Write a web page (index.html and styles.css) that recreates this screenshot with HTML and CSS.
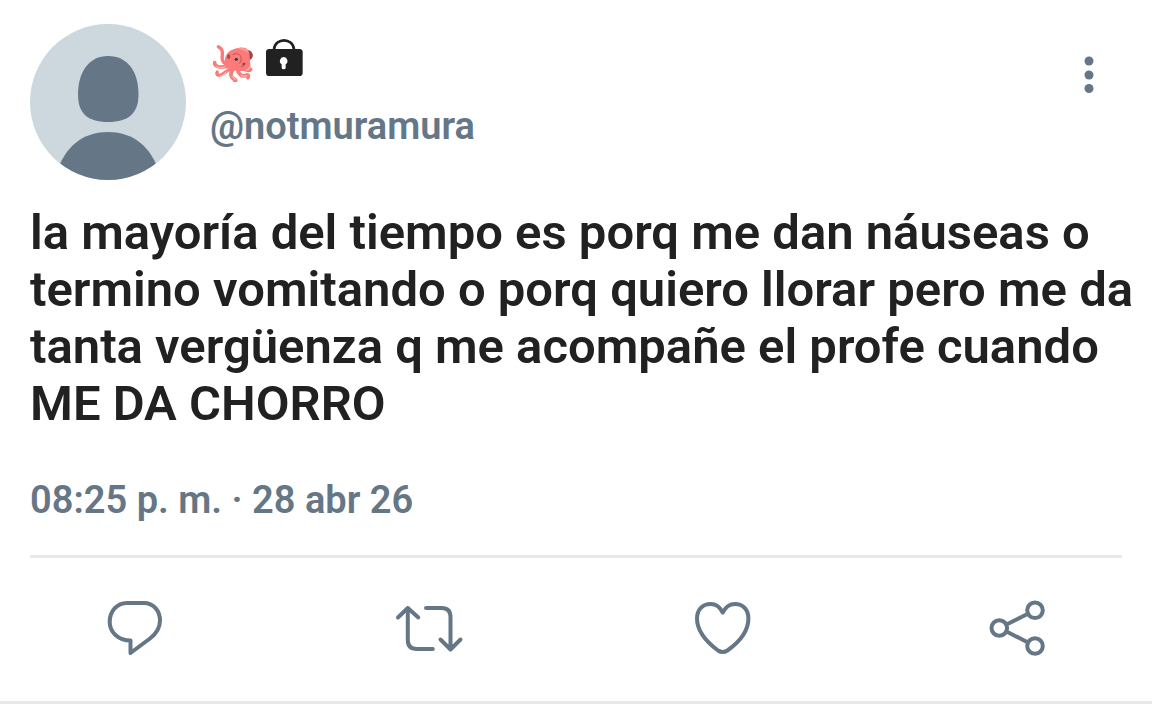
FILE: index.html
```html
<!DOCTYPE html>
<html lang="es">
<head>
<meta charset="utf-8">
<meta name="viewport" content="width=device-width, initial-scale=1">
<title>@notmuramura</title>
<link rel="stylesheet" href="styles.css">
</head>
<body>
<article class="post">
  <header class="head">
    <svg class="avatar" viewBox="0 0 156 156" aria-hidden="true">
      <defs><clipPath id="disc"><circle cx="78" cy="78" r="78"/></clipPath></defs>
      <g clip-path="url(#disc)">
        <path fill="#ccd8dd" d="M0 0h156v156H0z"/>
        <path fill="#657786" d="M78 32c20 0 30.500 16 30.500 38.500C108.500 89 99 98 78 98S48 89 48 70.500C48 48 59 32 78 32z"/>
        <path fill="#657786" d="M78 108c23 0 39 12 48 32v16H30v-16c9-20 25-32 48-32z"/>
      </g>
    </svg>
    <div class="who">
      <div class="name">
        <svg class="octopus" viewBox="21 12 126 132" role="img" aria-label="Pulpo">
          <g fill="none" stroke="#fb7a7a" stroke-linecap="round" stroke-linejoin="round">
            <path stroke-width="10" d="M80 92C58 92 52 80 55 62C57 50 51 42 43 38"/>
            <path stroke-width="11" d="M88 96C68 96 52 102 42 98C34 95 31 91 32 86"/>
            <path stroke-width="10" d="M86 104C66 106 62 122 46 124C38 124 37 118 40 114"/>
            <path stroke-width="11" d="M90 104C74 118 82 132 92 136C97 138 96 140 92 141"/>
            <path stroke-width="11" d="M100 104C102 120 114 130 126 124C132 120 135 126 132 131"/>
            <path stroke-width="11" d="M112 98C122 108 134 112 140 106"/>
          </g>
          <path fill="#a93f42" d="M128 48c12-1 21 10 18 20-2 7-7 10-13 11z"/>
          <path fill="#fb7a7a" d="M62 84C62 58 80 45 103 42C126 37 137 48 137 66C137 82 140 90 140 104C128 114 86 112 74 104C64 98 61 93 62 84z"/>
          <path fill="#ff9d99" d="M101 44c16-5 29 0 33 13-9-8-20-9-33-13z"/>
          <ellipse cx="74" cy="68" rx="5" ry="7" fill="#b34a4b"/>
          <circle cx="97" cy="76" r="7" fill="#e89490"/>
          <circle cx="97" cy="76" r="5" fill="#5a2a30"/>
          <path fill="none" stroke="#c25252" stroke-width="3" stroke-linecap="round" d="M87 62c8-6 19-3 23 6s0 16-4 20M112 97c7 0 10-3 11-9"/>
          <circle cx="119" cy="90" r="4" fill="#8d4043"/>
          <path fill="none" stroke="#ffd0bf" stroke-width="3" stroke-linecap="round" d="M38 98c8 6 17 3 25 0M48 127c9-1 13-8 18-13M84 127c3 5 8 6 10 10M111 124c7 4 13 4 18 1M127 108c7 0 12-6 13-14"/>
        </svg>
        <svg class="lock" viewBox="180 12 117 117" role="img" aria-label="Cuenta protegida">
          <path fill="none" stroke="#212121" stroke-width="8" d="M207 46C211 10 263 10 267 46"/>
          <rect x="183" y="45" width="110" height="81" rx="10" fill="#212121"/>
          <path fill="#fff" d="M236 69a12 12 0 0 1 6 22v10a6 5 0 0 1-12 0V91a12 12 0 0 1 6-22z"/>
        </svg>
      </div>
      <a class="handle" href="#">@notmuramura</a>
    </div>
    <button class="more" type="button" aria-label="Más opciones">
      <svg class="dots" viewBox="0 0 12 40" aria-hidden="true">
        <g fill="#657786"><circle cx="6" cy="6" r="4.500"/><circle cx="6" cy="20" r="4.500"/><circle cx="6" cy="33.500" r="4.500"/></g>
      </svg>
    </button>
  </header>
  <p class="text">la mayoría del tiempo es porq me dan náuseas o termino vomitando o porq quiero llorar pero me da tanta vergüenza q me acompañe el profe cuando ME DA CHORRO</p>
  <time class="date">08:25 p. m. · 28 abr 26</time>
  <hr class="rule">
  <div class="actions">
    <button class="action" type="button" aria-label="Responder">
      <svg class="icon" viewBox="0 0 72 72"><path d="M28 11h17C54.500 11 61 19 61 28.500c0 7.500-3.500 13-10 18L31.500 61V48.500C19 48.500 10.700 40 10.700 30C10.700 19 18 11 28 11z"/></svg>
    </button>
    <button class="action" type="button" aria-label="Retuitear">
      <svg class="icon" viewBox="0 0 72 72"><path d="M5 25.500L14.800 16l10.500 9.500M14.800 16v32q0 9 9 9h16M33 16h15.500q9 0 9 9v32M47.500 47.500l10 10 10-10"/></svg>
    </button>
    <button class="action" type="button" aria-label="Me gusta">
      <svg class="icon" viewBox="0 0 72 72"><path d="M35.700 20.500C33 15 29 12 23.700 12C15 12 10 18 10 26.500C10 40 21 51 31 58.500q4.700 3 9.400 0C51 51 61.400 40 61.400 26.500C61.400 18 56.500 12 48 12C42.500 12 38.500 15 35.700 20.500z"/></svg>
    </button>
    <button class="action" type="button" aria-label="Compartir">
      <svg class="icon" viewBox="0 0 72 72"><circle cx="18.300" cy="36" r="7.800"/><circle cx="54" cy="18.300" r="7.800"/><circle cx="54" cy="54" r="7.800"/><path d="M25.500 32.500l21.500-10.700M25.500 39.500L47 50.500"/></svg>
    </button>
  </div>
</article>
</body>
</html>
```
FILE: styles.css
```css
* { box-sizing: border-box; }
body {
  margin: 0;
  background: #fff;
  color: #212121;
  font-family: Roboto, "Liberation Sans", sans-serif;
  font-weight: 600;
}
button { padding: 0; border: 0; background: none; cursor: pointer; }
svg { display: block; }
.post {
  padding: 24px 14px 37px 30px;
  border-bottom: 3px solid #e8e8e8;
}
.head { display: flex; align-items: flex-start; gap: 24px; }
.avatar { width: 156px; height: 156px; flex: none; }
.who { flex: 1; padding-top: 14px; }
.name { display: flex; gap: 11px; height: 44px; }
.octopus { width: 44px; height: 44px; }
.lock { width: 39px; height: 39px; }
.handle {
  display: block;
  margin-top: 20px;
  color: #657786;
  font-size: 38px;
  line-height: 48px;
  text-decoration: none;
}
.more { margin: 31px 43px 0 0; }
.dots { width: 12px; height: 40px; }
.text {
  margin: 24px 0 0;
  font-size: 49px;
  line-height: 57px;
}
.date {
  display: block;
  margin-top: 44px;
  color: #657786;
  font-size: 38px;
  line-height: 48px;
}
.rule {
  margin: 31px 16px 0 0;
  border: 0;
  height: 3px;
  background: #e8e8e8;
}
.actions {
  display: flex;
  justify-content: space-between;
  padding: 34px 85px 0 69px;
}
.icon {
  width: 72px;
  height: 72px;
  fill: none;
  stroke: #657786;
  stroke-width: 4;
  stroke-linecap: round;
  stroke-linejoin: round;
}
```
